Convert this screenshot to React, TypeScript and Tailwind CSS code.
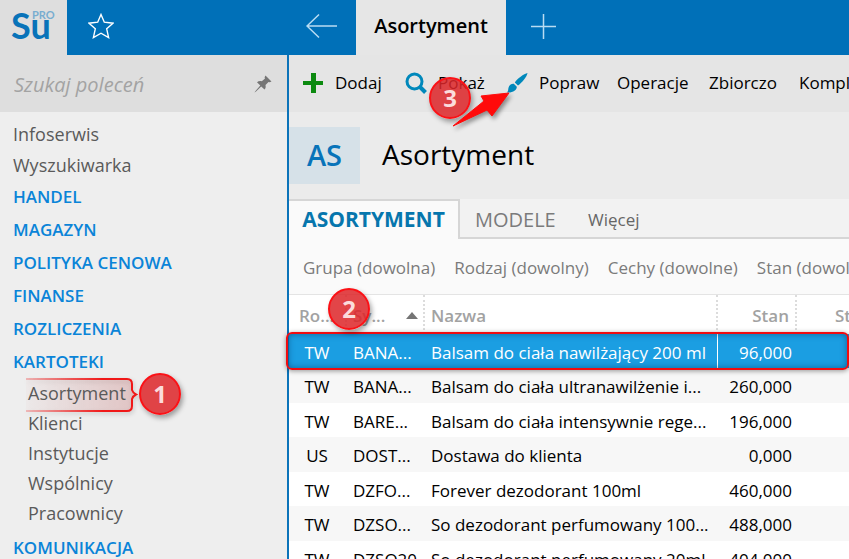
import type { ReactNode } from 'react';

const groups = ['HANDEL', 'MAGAZYN', 'POLITYKA CENOWA', 'FINANSE', 'ROZLICZENIA', 'KARTOTEKI'];
const files = ['Asortyment', 'Klienci', 'Instytucje', 'Wspólnicy', 'Pracownicy'];

const rows = [
  ['TW', 'BANA...', 'Balsam do ciała nawilżający 200 ml', '96,000'],
  ['TW', 'BANA...', 'Balsam do ciała ultranawilżenie i...', '260,000'],
  ['TW', 'BARE...', 'Balsam do ciała intensywnie rege...', '196,000'],
  ['US', 'DOST...', 'Dostawa do klienta', '0,000'],
  ['TW', 'DZFO...', 'Forever dezodorant 100ml', '460,000'],
  ['TW', 'DZSO...', 'So dezodorant perfumowany 100...', '488,000'],
  ['TW', 'DZSO20', 'So dezodorant perfumowany 20ml', '404,000'],
];

function Badge({ className, children }: { className: string; children: ReactNode }) {
  return (
    <span
      className={`pointer-events-none absolute z-20 flex size-[42px] items-center justify-center rounded-full border-2 border-[#fb1116] bg-[#dd2428]/85 text-[24px] leading-none font-bold text-[#fbdcdc] shadow-[2px_3px_5px_rgba(0,0,0,0.35)] ${className}`}
    >
      {children}
    </span>
  );
}

function PinIcon() {
  return (
    <svg viewBox="0 0 18 18" className="size-[18px]" fill="#757575" aria-hidden="true">
      <path d="M11.500.500 17.500 6.500 15.700 7.300 14.500 7 11.500 10C12 12 11.500 13.500 10.500 14.500L7.200 11.400 2 16.500.5 17.500 1.500 16 6.300 10.500 3 7.300C4.200 6.200 6 5.800 7.800 6.300L11 3.500 10.600 2.300Z" />
    </svg>
  );
}

function Sidebar() {
  return (
    <aside className="w-[287px] shrink-0 bg-[#eeeeee]">
      <form className="flex h-[57px] items-center bg-[#dedede] pr-[15px] pl-[14px]">
        <input
          type="search"
          aria-label="Szukaj poleceń"
          placeholder="Szukaj poleceń"
          className="min-w-0 grow bg-transparent pt-[2px] text-[20px] italic outline-none placeholder:text-[#a3a3a3]"
        />
        <button type="button" aria-label="Przypnij">
          <PinIcon />
        </button>
      </form>
      <nav className="pt-[6px] text-[18px] text-[#5a5a5a]">
        <a href="#infoserwis" className="block h-[31px] pl-[13px] leading-[32px]">Infoserwis</a>
        <a href="#wyszukiwarka" className="block h-[31px] pl-[13px] leading-[32px]">Wyszukiwarka</a>
        {groups.map((g) => (
          <a key={g} href={`#${g}`} className="block h-[33px] pl-[13px] text-[17px] leading-[33px] font-semibold text-[#0a84d8]">
            {g}
          </a>
        ))}
        <div className="relative">
          <svg viewBox="0 0 120 40" className="pointer-events-none absolute top-0 left-[22px] h-[40px] w-[120px] drop-shadow-[1px_2px_2px_rgba(0,0,0,0.2)]" fill="none" aria-hidden="true">
            <defs>
              <linearGradient id="line" gradientUnits="userSpaceOnUse" x1="4" x2="114" y1="0" y2="0">
                <stop offset="0" stopColor="#f01818" stopOpacity="0.25" />
                <stop offset="0.7" stopColor="#f01818" />
              </linearGradient>
              <linearGradient id="wash" gradientUnits="userSpaceOnUse" x1="4" x2="114" y1="0" y2="0">
                <stop offset="0" stopColor="#d86060" stopOpacity="0.03" />
                <stop offset="1" stopColor="#d86060" stopOpacity="0.24" />
              </linearGradient>
            </defs>
            <path d="M4 0H105Q110 0 110 5V12L114 16 110 20V28Q110 32 105 32H4Z" fill="url(#wash)" />
            <path d="M4 1H105Q110 1 110 6V12Q111 15 114 16.500 111 18 110 21V28Q110 33 105 33H4" stroke="url(#line)" strokeWidth="2" />
          </svg>
          <Badge className="top-[-5px] left-[139px]">1</Badge>
          {files.map((f) => (
            <a key={f} href={`#${f}`} className="relative block h-[30px] pl-[28px] leading-[30px]">
              {f}
            </a>
          ))}
        </div>
        <a href="#KOMUNIKACJA" className="mt-[3px] block h-[33px] pl-[13px] text-[17px] leading-[33px] font-semibold text-[#0a84d8]">
          KOMUNIKACJA
        </a>
      </nav>
    </aside>
  );
}

function Toolbar() {
  return (
    <div className="flex h-[57px] items-center bg-[#e5e5e5] pb-[2px] text-[17px] whitespace-nowrap text-black">
      <button type="button" className="flex w-[116px] shrink-0 items-center gap-[12px] pl-[14px]">
        <svg viewBox="0 0 20 20" className="size-[20px]" fill="#0c8a10" aria-hidden="true">
          <path d="M8 0h5v8h7v4h-7v8H8v-8H0V8h8z" />
        </svg>
        Dodaj
      </button>
      <button type="button" className="flex w-[102px] shrink-0 items-center gap-[11px]">
        <svg viewBox="0 0 22 22" className="size-[22px]" fill="none" stroke="#0088bb" aria-hidden="true">
          <circle cx="9.500" cy="9.500" r="7.500" strokeWidth="3" />
          <path d="m14.500 14.500 6 6" strokeWidth="4" />
        </svg>
        Pokaż
      </button>
      <button type="button" className="flex w-[110px] shrink-0 items-center gap-[11px]">
        <svg viewBox="0 0 21 22" className="h-[22px] w-[21px]" fill="#0088bb" aria-hidden="true">
          <path d="M20.500 1C17 1.500 10 7 7.800 10.500L11 13.500C14.500 11 20 5 20.500 1Z" />
          <path d="M6.800 11.800 9.800 14.800C10 18 6 21 0 20.500 1.500 19 1 17.500 1.500 15.800 2.200 13 4.500 11.500 6.800 11.800Z" />
        </svg>
        Popraw
      </button>
      <button type="button" className="w-[92px] shrink-0 text-left">Operacje</button>
      <button type="button" className="w-[90px] shrink-0 text-left">Zbiorczo</button>
      <button type="button" className="shrink-0">Komplety</button>
    </div>
  );
}

function ItemTable() {
  const head = 'border-r-2 border-dotted border-[#dcdcdc] pt-[2px] font-semibold';
  return (
    <div className="relative">
      <table className="w-full table-fixed border-separate border-spacing-0 text-[17px] whitespace-nowrap text-black">
        <colgroup>
          <col className="w-[58px]" />
          <col className="w-[78px]" />
          <col className="w-[293px]" />
          <col className="w-[79px]" />
          <col />
        </colgroup>
        <thead>
          <tr className="h-[39px] text-left text-[#a2a2a2]">
            <th scope="col" className={`${head} pl-[10px]`}>Ro...</th>
            <th scope="col" className={head}>
              <span className="flex items-center justify-between pr-[5px] pl-[6px]">
                Sy...
                <svg viewBox="0 0 12 7" className="h-[7px] w-[12px]" fill="#757575" aria-hidden="true">
                  <path d="M6 0 12 7H0z" />
                </svg>
              </span>
            </th>
            <th scope="col" className={`${head} pl-[6px]`}>Nazwa</th>
            <th scope="col" className={`${head} pr-[6px] text-right`}>Stan</th>
            <th scope="col" className="overflow-hidden pt-[2px] pl-[38px] font-semibold">Stan</th>
          </tr>
        </thead>
        <tbody>
          {rows.map(([kind, symbol, name, stock], i) => (
            <tr
              key={i}
              className={
                i === 0
                  ? 'h-[34px] bg-[#1b9ee2] text-white'
                  : 'odd:h-[34px] odd:bg-white even:h-[35px] even:bg-[#f7f7f7]'
              }
            >
              <td className="p-0 pt-[3px] pr-[2px] text-center">{kind}</td>
              <td className="overflow-hidden p-0 pt-[3px] pl-[6px]">{symbol}</td>
              <td className={`overflow-hidden p-0 pt-[3px] pl-[6px] ${i === 0 ? 'border-r border-white' : ''}`}>{name}</td>
              <td className="p-0 pt-[3px] pr-[5px] text-right">{stock}</td>
              <td className="p-0" />
            </tr>
          ))}
        </tbody>
      </table>
      <div className="pointer-events-none absolute top-[37px] right-0 left-[-3px] z-10 h-[38px] rounded-[6px] border-2 border-[#f00c10] shadow-[0_1px_5px_rgba(0,0,0,0.4),inset_0_0_6px_rgba(0,40,80,0.5)]" />
      <Badge className="top-[-7px] left-[39px]">2</Badge>
    </div>
  );
}

export default function App() {
  return (
    <div className="flex h-screen flex-col overflow-hidden bg-white font-['Open_Sans','Noto_Sans',sans-serif]">
      <header className="flex h-[55px] shrink-0 bg-[#0070b8] text-white">
        <div className="relative w-[67px] bg-[#dedede] pl-[11px] font-['Lato',sans-serif]">
          <span className="text-[36px] leading-[50px] font-bold text-[#0873b9]">Su</span>
          <span className="absolute top-[8px] left-[32px] text-[11px] leading-[14px] font-bold text-[#78add0]">PRO</span>
        </div>
        <button type="button" aria-label="Ulubione" className="w-[221px] pb-[3px] pl-[21px]">
          <svg viewBox="0 0 26 26" className="size-[26px]" fill="none" stroke="white" strokeWidth="1.400" aria-hidden="true">
            <path d="M13 1.500 16.300 9.200 25 10.200 18.700 15.800 20.600 24.500 13 20.200 5.400 24.500 7.300 15.800 1 10.200 9.700 9.200Z" />
          </svg>
        </button>
        <button type="button" aria-label="Wstecz" className="w-[68px] pb-[3px] pl-[18px]">
          <svg viewBox="0 0 32 26" className="h-[26px] w-[32px]" fill="none" stroke="#b9dcf2" strokeWidth="1.500" aria-hidden="true">
            <path d="M31 13H1M13 1.500 1 13l12 11.500" />
          </svg>
        </button>
        <button type="button" className="w-[150px] bg-[#e6e6e6] pb-[3px] text-[20px] font-semibold text-black">Asortyment</button>
        <button type="button" aria-label="Nowa karta" className="w-[75px] pb-[3px] pl-[25px]">
          <svg viewBox="0 0 25 25" className="size-[25px]" stroke="#b9dcf2" strokeWidth="1.500" aria-hidden="true">
            <path d="M12.500 0v25M0 12.500h25" />
          </svg>
        </button>
      </header>
      <div className="flex min-h-0 grow">
        <Sidebar />
        <main className="relative min-w-0 grow border-l-2 border-[#0b73b9]">
          <Toolbar />
          <div className="flex h-[87px] items-center gap-[22px] bg-[#ebebeb]">
            <span className="flex h-[57px] w-[71px] items-center justify-center bg-[#d6e1e8] pb-[2px] text-[29px] font-semibold text-[#0873b9]">AS</span>
            <h1 className="pb-[4px] text-[28px] text-black">Asortyment</h1>
          </div>
          <div className="flex h-[40px] bg-[#f2f2f2] whitespace-nowrap">
            <button type="button" className="w-[171px] shrink-0 border-t-2 border-r-2 border-[#d6d6d6] bg-[#fafafa] text-[21px] font-bold text-[#0676ad]">ASORTYMENT</button>
            <div className="flex grow items-center border-b-2 border-[#d6d6d6] pt-[4px] text-[#7b7b7b]">
              <button type="button" className="w-[128px] pl-[15px] text-left text-[20px]">MODELE</button>
              <button type="button" className="text-[17px] text-[#666666]">Więcej</button>
            </div>
          </div>
          <div className="flex h-[56px] items-center gap-[19px] overflow-hidden border-b border-[#e4e4e4] bg-[#fafafa] pt-[2px] pl-[14px] text-[17px] whitespace-nowrap text-[#7b7b7b]">
            <button type="button">Grupa (dowolna)</button>
            <button type="button">Rodzaj (dowolny)</button>
            <button type="button">Cechy (dowolne)</button>
            <button type="button">Stan (dowolny)</button>
          </div>
          <ItemTable />
          <Badge className="top-[22px] left-[140px]">3</Badge>
          <svg viewBox="0 0 66 46" className="pointer-events-none absolute top-[30px] left-[160px] z-20 h-[46px] w-[66px] drop-shadow-[2px_3px_2px_rgba(0,0,0,0.4)]" aria-hidden="true">
            <path d="M4 41 35 16 32 11 60 8 43 31 38 25Z" fill="#ff0a0a" stroke="#ff0a0a" strokeLinejoin="round" />
          </svg>
        </main>
      </div>
    </div>
  );
}
